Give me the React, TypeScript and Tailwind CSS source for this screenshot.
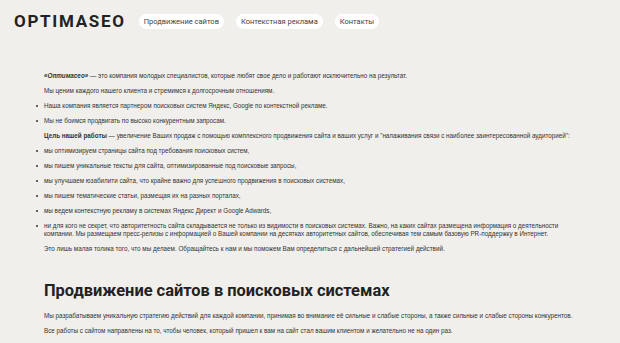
import React from "react";

const navItems = ["Продвижение сайтов", "Контекстная реклама", "Контакты"];

function Bullet({ children }: { children: React.ReactNode }) {
  return (
    <li className="flex -ml-[8px] mb-[7.5px]">
      <span className="shrink-0 w-[2px] h-[2px] rounded-full bg-[#333] mt-[3px] mr-[6px]" />
      <span>{children}</span>
    </li>
  );
}

export default function App() {
  return (
    <div className="min-h-screen bg-[#f0efeb] text-[#333]">
      <header className="flex items-center h-[43px] pl-[14px]">
        <div className="font-['Roboto',sans-serif] font-bold text-[17px] tracking-[1.7px] text-[#222] leading-none">
          OPTIMASEO
        </div>
        <nav className="flex items-center gap-[12px] ml-[13px]">
          {navItems.map((item) => (
            <a
              key={item}
              href="#"
              className="flex items-center h-[15px] px-[5px] rounded-full bg-white font-['Roboto',sans-serif] text-[7.5px] text-[#444]"
            >
              {item}
            </a>
          ))}
        </nav>
      </header>

      <main className="px-[44px] pt-[29px] font-['Liberation_Sans',Arial,sans-serif] text-[6.3px] leading-[7.5px]">
        <p className="mb-[7.5px]">
          <b><i>«Оптимасео»</i></b> — это компания молодых специалистов, которые любят свое дело и работают исключительно на результат.
        </p>
        <p className="mb-[7.5px]">Мы ценим каждого нашего клиента и стремимся к долгосрочным отношениям.</p>
        <ul>
          <Bullet>Наша компания является партнером поисковых систем Яндекс, Google по контекстной рекламе.</Bullet>
          <Bullet>Мы не боимся продвигать по высоко конкурентным запросам.</Bullet>
        </ul>
        <p className="mb-[7.5px]">
          <b>Цель нашей работы</b> — увеличение Ваших продаж с помощью комплексного продвижения сайта и ваших услуг и "налаживания связи с наиболее заинтересованной аудиторией":
        </p>
        <ul>
          <Bullet>мы оптимизируем страницы сайта под требования поисковых систем,</Bullet>
          <Bullet>мы пишем уникальные тексты для сайта, оптимизированные под поисковые запросы,</Bullet>
          <Bullet>мы улучшаем юзабилити сайта, что крайне важно для успешного продвижения в поисковых системах,</Bullet>
          <Bullet>мы пишем тематические статьи, размещая их на разных порталах,</Bullet>
          <Bullet>мы ведем контекстную рекламу в системах Яндекс Директ и Google Adwards,</Bullet>
          <Bullet>
            ни для кого не секрет, что авторитетность сайта складывается не только из видимости в поисковых системах. Важно, на каких сайтах размещена информация о деятельности компании. Мы размещаем пресс-релизы с информацией о Вашей компании на десятках авторитетных сайтов, обеспечивая тем самым базовую PR-поддержку в Интернет.
          </Bullet>
        </ul>
        <p className="mb-[7.5px]">
          Это лишь малая толика того, что мы делаем. Обращайтесь к нам и мы поможем Вам определиться с дальнейшей стратегией действий.
        </p>
        <h2 className="mt-[28.5px] mb-[11px] font-['Roboto',sans-serif] font-bold text-[16.4px] leading-[20px] text-[#222]">
          Продвижение сайтов в поисковых системах
        </h2>
        <p className="mb-[7.5px]">
          Мы разрабатываем уникальную стратегию действий для каждой компании, принимая во внимание её сильные и слабые стороны, а также сильные и слабые стороны конкурентов.
        </p>
        <p className="mb-[7.5px]">
          Все работы с сайтом направлены на то, чтобы человек, который пришел к вам на сайт стал вашим клиентом и желательно не на один раз.
        </p>
      </main>
    </div>
  );
}
